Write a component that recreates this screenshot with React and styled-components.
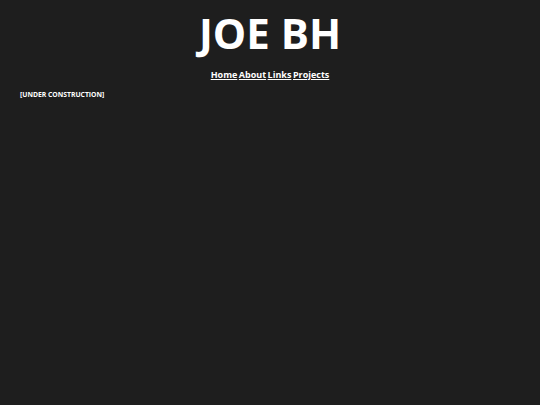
import React from "react";
import styled, { createGlobalStyle } from "styled-components";

const GlobalStyle = createGlobalStyle`
  html, body {
    margin: 0;
    padding: 0;
    background: #1e1e1e;
    color: #ffffff;
    font-family: "Open Sans", "Noto Sans", sans-serif;
  }
`;

const Page = styled.div`
  min-height: 405px;
  background: #1e1e1e;
`;

const Header = styled.header`
  display: flex;
  flex-direction: column;
  align-items: center;
  padding-top: 7px;
`;

const Title = styled.h1`
  margin: 0;
  font-size: 42px;
  font-weight: 700;
  line-height: 52px;
`;

const Nav = styled.nav`
  display: flex;
  gap: 1.5px;
  margin-top: 9px;
`;

const NavLink = styled.a`
  color: #ffffff;
  font-size: 9px;
  font-weight: 700;
  text-decoration: underline;
`;

const Notice = styled.p`
  margin: 8.5px 0 0 20px;
  font-size: 6.8px;
  font-weight: 700;
`;

export default function App() {
  return (
    <Page>
      <GlobalStyle />
      <Header>
        <Title>JOE BH</Title>
        <Nav>
          <NavLink href="#">Home</NavLink>
          <NavLink href="#">About</NavLink>
          <NavLink href="#">Links</NavLink>
          <NavLink href="#">Projects</NavLink>
        </Nav>
      </Header>
      <Notice>[UNDER CONSTRUCTION]</Notice>
    </Page>
  );
}
